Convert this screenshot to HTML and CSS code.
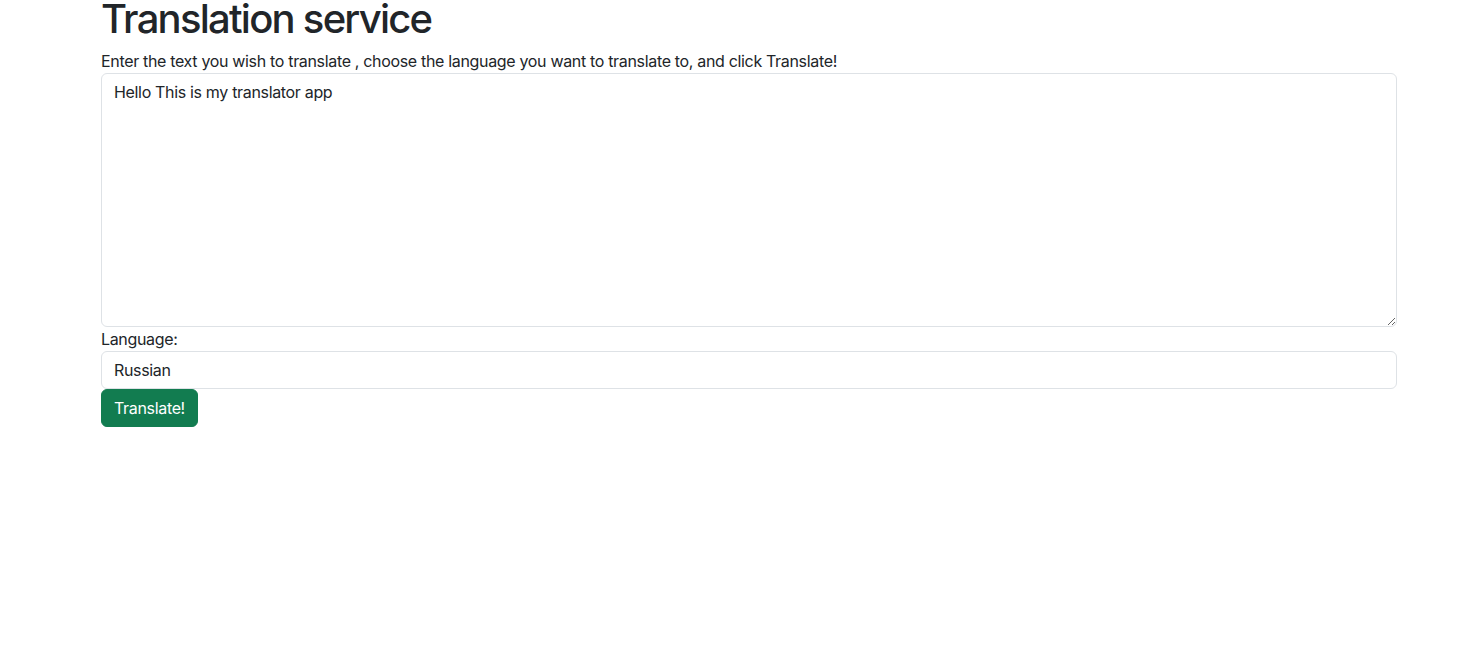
FILE: index.html
```html
<!DOCTYPE html>
<html lang="en">
<head>
<meta charset="utf-8">
<title>Translation service</title>
<link rel="stylesheet" href="styles.css">
</head>
<body>
<main class="container">
  <h1 class="title">Translation service</h1>
  <form class="form">
    <label class="label" for="text">Enter the text you wish to translate , choose the language you want to translate to, and click Translate!</label>
    <textarea id="text" class="control area">Hello This is my translator app</textarea>
    <label class="label" for="lang">Language:</label>
    <input id="lang" class="control" type="text" value="Russian">
    <div><button type="button" class="btn">Translate!</button></div>
  </form>
</main>
</body>
</html>
```
FILE: styles.css
```css
* { box-sizing: border-box; }
html, body { margin: 0; background: #fff; }
body {
  font-family: Inter, "Noto Sans", "Liberation Sans", sans-serif;
  font-size: 16px;
  line-height: 1.5;
  letter-spacing: -0.33px;
  color: #212529;
}
.container {
  width: 1296px;
  margin-left: 101px;
}
.title {
  font-size: 40px;
  font-weight: 500;
  line-height: 38px;
  letter-spacing: -1.75px;
  margin: 0 0 11px;
}
.form { display: flex; flex-direction: column; }
.label { display: block; }
.control {
  display: block;
  width: 100%;
  padding: 6px 12px;
  font: inherit;
  letter-spacing: inherit;
  color: #212529;
  background: #fff;
  border: 1px solid #dee2e6;
  border-radius: 6px;
  line-height: 1.5;
}
.area { height: 254px; resize: vertical; }
.btn {
  font: inherit;
  letter-spacing: inherit;
  color: #fff;
  background: #127c50;
  border: 1px solid #127c50;
  border-radius: 6px;
  padding: 6px 12px;
  line-height: 1.5;
  cursor: pointer;
}
```
